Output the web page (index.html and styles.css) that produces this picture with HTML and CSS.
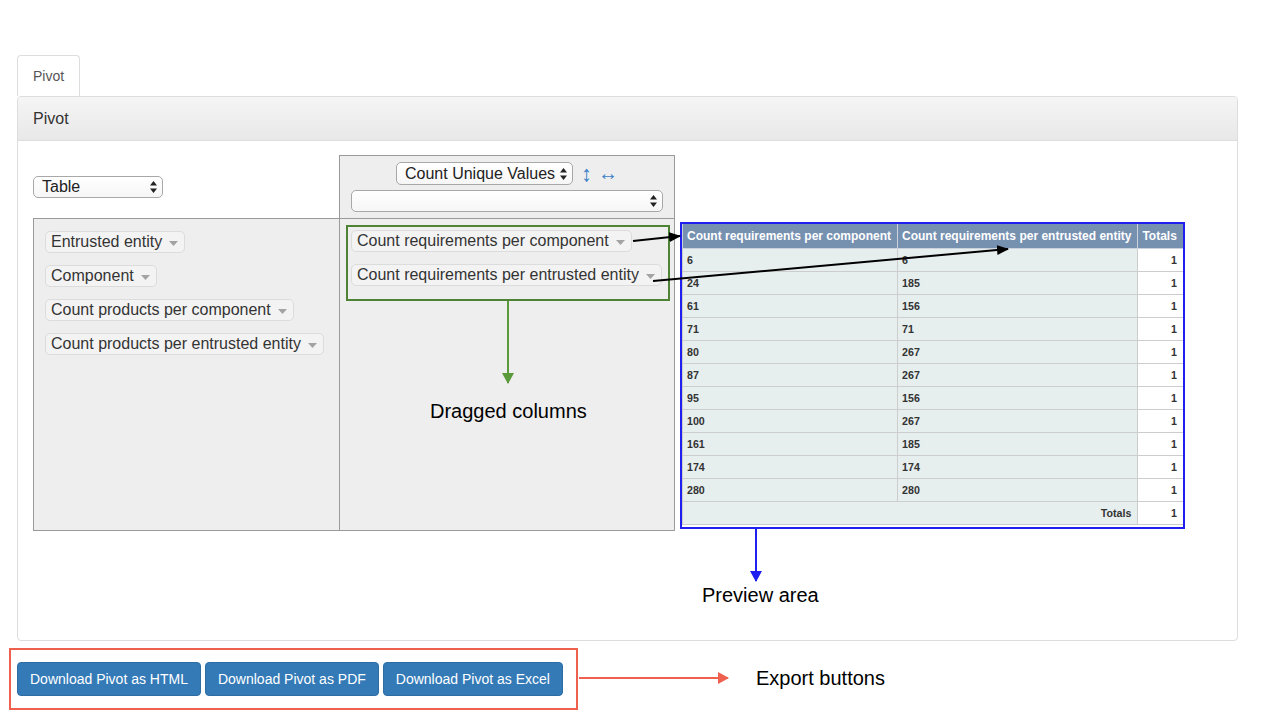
FILE: index.html
```html
<!DOCTYPE html>
<html lang="en">
<head>
<meta charset="utf-8">
<title>Pivot</title>
<link rel="stylesheet" href="styles.css">
</head>
<body>
<div class="page">
  <ul class="nav-tabs">
    <li class="tab active">Pivot</li>
  </ul>
  <div class="panel">
    <div class="panel-heading">Pivot</div>
    <div class="panel-body">
      <div class="pvt-ui">
        <div class="cell renderer-cell">
          <div class="select sel-table"><span class="sel-text">Table</span><svg class="sel-arrows" width="7" height="12" viewBox="0 0 7 12"><path d="M3.5 0 L7 4.5 H0 Z M3.5 12 L0 7.5 H7 Z" fill="#222"/></svg></div>
        </div>
        <div class="cell agg-cell">
          <div class="agg-row">
            <div class="select sel-agg"><span class="sel-text">Count Unique Values</span><svg class="sel-arrows" width="7" height="12" viewBox="0 0 7 12"><path d="M3.5 0 L7 4.5 H0 Z M3.5 12 L0 7.5 H7 Z" fill="#222"/></svg></div>
            <a class="order order-v">↕</a>
            <a class="order order-h">↔</a>
          </div>
          <div class="select sel-attr"><span class="sel-text"></span><svg class="sel-arrows" width="7" height="12" viewBox="0 0 7 12"><path d="M3.5 0 L7 4.5 H0 Z M3.5 12 L0 7.5 H7 Z" fill="#222"/></svg></div>
        </div>
        <ul class="cell axis unused">
          <li class="pill">Entrusted entity<svg class="tri" width="9" height="5" viewBox="0 0 9 5"><path d="M0 0 H9 L4.5 5 Z" fill="#a3a3a3"/></svg></li>
          <li class="pill">Component<svg class="tri" width="9" height="5" viewBox="0 0 9 5"><path d="M0 0 H9 L4.5 5 Z" fill="#a3a3a3"/></svg></li>
          <li class="pill">Count products per component<svg class="tri" width="9" height="5" viewBox="0 0 9 5"><path d="M0 0 H9 L4.5 5 Z" fill="#a3a3a3"/></svg></li>
          <li class="pill">Count products per entrusted entity<svg class="tri" width="9" height="5" viewBox="0 0 9 5"><path d="M0 0 H9 L4.5 5 Z" fill="#a3a3a3"/></svg></li>
        </ul>
        <ul class="cell axis rows">
          <li class="pill">Count requirements per component<svg class="tri" width="9" height="5" viewBox="0 0 9 5"><path d="M0 0 H9 L4.5 5 Z" fill="#a3a3a3"/></svg></li>
          <li class="pill">Count requirements per entrusted entity<svg class="tri" width="9" height="5" viewBox="0 0 9 5"><path d="M0 0 H9 L4.5 5 Z" fill="#a3a3a3"/></svg></li>
        </ul>
        <div class="cell output">
          <table class="pvt-table">
            <thead>
              <tr><th>Count requirements per component</th><th>Count requirements per entrusted entity</th><th>Totals</th></tr>
            </thead>
            <tbody>
              <tr><th>6</th><th>6</th><td>1</td></tr>
              <tr><th>24</th><th>185</th><td>1</td></tr>
              <tr><th>61</th><th>156</th><td>1</td></tr>
              <tr><th>71</th><th>71</th><td>1</td></tr>
              <tr><th>80</th><th>267</th><td>1</td></tr>
              <tr><th>87</th><th>267</th><td>1</td></tr>
              <tr><th>95</th><th>156</th><td>1</td></tr>
              <tr><th>100</th><th>267</th><td>1</td></tr>
              <tr><th>161</th><th>185</th><td>1</td></tr>
              <tr><th>174</th><th>174</th><td>1</td></tr>
              <tr><th>280</th><th>280</th><td>1</td></tr>
              <tr><th colspan="2" class="total-label">Totals</th><td>1</td></tr>
            </tbody>
          </table>
        </div>
      </div>
    </div>
  </div>
  <div class="actions">
    <button class="btn">Download Pivot as HTML</button>
    <button class="btn">Download Pivot as PDF</button>
    <button class="btn">Download Pivot as Excel</button>
  </div>

  <svg class="annotations" width="1283" height="710" viewBox="0 0 1283 710">
    <defs>
      <marker id="ah-black" markerUnits="userSpaceOnUse" markerWidth="12" markerHeight="10" refX="11" refY="5" orient="auto"><path d="M0 0 L12 5 L0 10 Z" fill="#000"/></marker>
      <marker id="ah-green" markerUnits="userSpaceOnUse" markerWidth="12" markerHeight="12" refX="10" refY="6" orient="auto"><path d="M0 0 L11 6 L0 12 Z" fill="#5a9a3b"/></marker>
      <marker id="ah-blue" markerUnits="userSpaceOnUse" markerWidth="12" markerHeight="12" refX="10" refY="6" orient="auto"><path d="M0 0 L11 6 L0 12 Z" fill="#1f1ff0"/></marker>
      <marker id="ah-red" markerUnits="userSpaceOnUse" markerWidth="12" markerHeight="12" refX="10" refY="6" orient="auto"><path d="M0 0 L11 6 L0 12 Z" fill="#f0604f"/></marker>
    </defs>
    <rect x="347" y="226" width="322" height="74" fill="none" stroke="#4e8234" stroke-width="2"/>
    <line x1="508" y1="301" x2="508" y2="383" stroke="#5a9a3b" stroke-width="2" marker-end="url(#ah-green)"/>
    <rect x="681" y="223" width="503" height="305" fill="none" stroke="#1f1ff0" stroke-width="2"/>
    <line x1="756" y1="529" x2="756" y2="581" stroke="#1f1ff0" stroke-width="2" marker-end="url(#ah-blue)"/>
    <line x1="633" y1="241" x2="680" y2="236" stroke="#000" stroke-width="2" marker-end="url(#ah-black)"/>
    <line x1="653" y1="281" x2="1008" y2="249" stroke="#000" stroke-width="2" marker-end="url(#ah-black)"/>
    <rect x="10" y="649" width="567" height="60" fill="none" stroke="#f0604f" stroke-width="2"/>
    <line x1="579" y1="678" x2="728" y2="678" stroke="#f0604f" stroke-width="2" marker-end="url(#ah-red)"/>
  </svg>
  <div class="note note-dragged">Dragged columns</div>
  <div class="note note-preview">Preview area</div>
  <div class="note note-export">Export buttons</div>
</div>
</body>
</html>
```

FILE: styles.css
```css
* { box-sizing: border-box; }

html, body {
  margin: 0;
  padding: 0;
  background: #fff;
}

body {
  font-family: "Liberation Sans", Arial, Helvetica, sans-serif;
  color: #333;
  font-size: 14px;
}

.page {
  position: relative;
  width: 1283px;
  height: 710px;
  padding: 55px 0 0 17px;
  overflow: hidden;
}

/* Tabs */
.nav-tabs {
  list-style: none;
  margin: 0;
  padding: 0;
  display: flex;
}

.tab {
  padding: 10px 15px;
  line-height: 20px;
  font-size: 14px;
  color: #555;
  background: #fff;
  border: 1px solid #ddd;
  border-bottom: none;
  border-radius: 4px 4px 0 0;
}

/* Panel */
.panel {
  width: 1221px;
  border: 1px solid #ddd;
  border-radius: 4px;
  background: #fff;
}

.panel-heading {
  padding: 12px 15px;
  line-height: 19px;
  font-size: 16px;
  color: #333;
  background: linear-gradient(to bottom, #f5f5f5 0%, #e8e8e8 100%);
  border-bottom: 1px solid #ddd;
  border-radius: 3px 3px 0 0;
}

.panel-body {
  height: 499px;
  padding: 14px 15px 0;
}

/* Pivot UI grid */
.pvt-ui {
  display: grid;
  grid-template-columns: 306px 336px 1fr;
  grid-template-rows: 63px 313px;
}

.cell { margin: 0; }

.renderer-cell {
  grid-column: 1;
  grid-row: 1;
  display: flex;
  align-items: center;
}

.agg-cell {
  grid-column: 2;
  grid-row: 1;
  background: #eee;
  border: 1px solid #9a9a9a;
  border-bottom: none;
  padding: 6px 11px;
  display: flex;
  flex-direction: column;
  align-items: center;
  gap: 5px;
}

.agg-row {
  display: flex;
  align-items: center;
  height: 23px;
}

.order {
  color: #3c7fc6;
  cursor: pointer;
}

.order-v {
  font-size: 22px;
  line-height: 23px;
  margin-left: 8px;
}

.order-h {
  font-size: 20px;
  line-height: 23px;
  margin-left: 6px;
}

/* fake native selects */
.select {
  display: flex;
  align-items: center;
  justify-content: space-between;
  height: 22px;
  padding: 0 5px 0 8px;
  border: 1px solid #a8a8a8;
  border-radius: 5px;
  background: linear-gradient(to bottom, #ffffff 0%, #f6f6f6 100%);
  font-size: 16px;
  color: #222;
}

.sel-table { width: 130px; }
.sel-agg { width: 177px; height: 23px; }
.sel-attr { width: 100%; height: 23px; }

.sel-text { white-space: nowrap; line-height: 18px; }
.sel-arrows { flex: none; margin-left: 4px; }

/* axis containers */
.axis {
  list-style: none;
  background: #eee;
  border: 1px solid #9a9a9a;
  padding: 11px 11px;
  display: flex;
  flex-direction: column;
  align-items: flex-start;
  gap: 12px;
}

.unused {
  grid-column: 1;
  grid-row: 2;
  border-right: none;
}

.rows {
  grid-column: 2;
  grid-row: 2;
  padding-top: 11px;
}

.pill {
  display: inline-flex;
  align-items: center;
  gap: 7px;
  padding: 1px 6px 1px 5px;
  line-height: 18px;
  font-size: 16px;
  color: #333;
  background: #f3f3f3;
  border: 1px solid #dcdcdc;
  border-radius: 5px;
  white-space: nowrap;
}

.unused .pill { margin-top: 1px; margin-bottom: -1px; }

.tri { flex: none; margin-top: 2px; }

/* Output */
.output {
  grid-column: 3;
  grid-row: 2;
  padding: 5px 0 0 7px;
}

.pvt-table {
  border-collapse: collapse;
  font-weight: bold;
  color: #333;
}

.pvt-table th,
.pvt-table td {
  border: 1px solid #cdcdcd;
  padding: 5px 6px 5px 4px;
  white-space: nowrap;
}

.pvt-table thead th {
  background: #7690b0;
  color: #fff;
  font-size: 12px;
  line-height: 14px;
  text-align: left;
  border-color: #c9d2dd;
}

.pvt-table tbody th {
  background: #e6eeee;
  font-size: 10.67px;
  line-height: 12px;
  text-align: left;
}

.pvt-table tbody th.total-label { text-align: right; }

.pvt-table td {
  background: #fff;
  font-size: 10.67px;
  line-height: 12px;
  text-align: right;
}

/* Buttons */
.actions {
  display: flex;
  gap: 4px;
  margin-top: 21px;
}

.btn {
  font-family: "Liberation Sans", Arial, Helvetica, sans-serif;
  font-size: 14px;
  line-height: 20px;
  padding: 6px 12px;
  color: #fff;
  background: #337ab7;
  border: 1px solid #2e6da4;
  border-radius: 4px;
  cursor: pointer;
}

/* Annotation overlay */
.annotations {
  position: absolute;
  left: 0;
  top: 0;
  pointer-events: none;
}

.note {
  position: absolute;
  font-size: 20px;
  line-height: 22px;
  color: #000;
  white-space: nowrap;
}

.note-dragged { left: 430px; top: 400px; }
.note-preview { left: 702px; top: 584px; }
.note-export { left: 756px; top: 667px; }
```
